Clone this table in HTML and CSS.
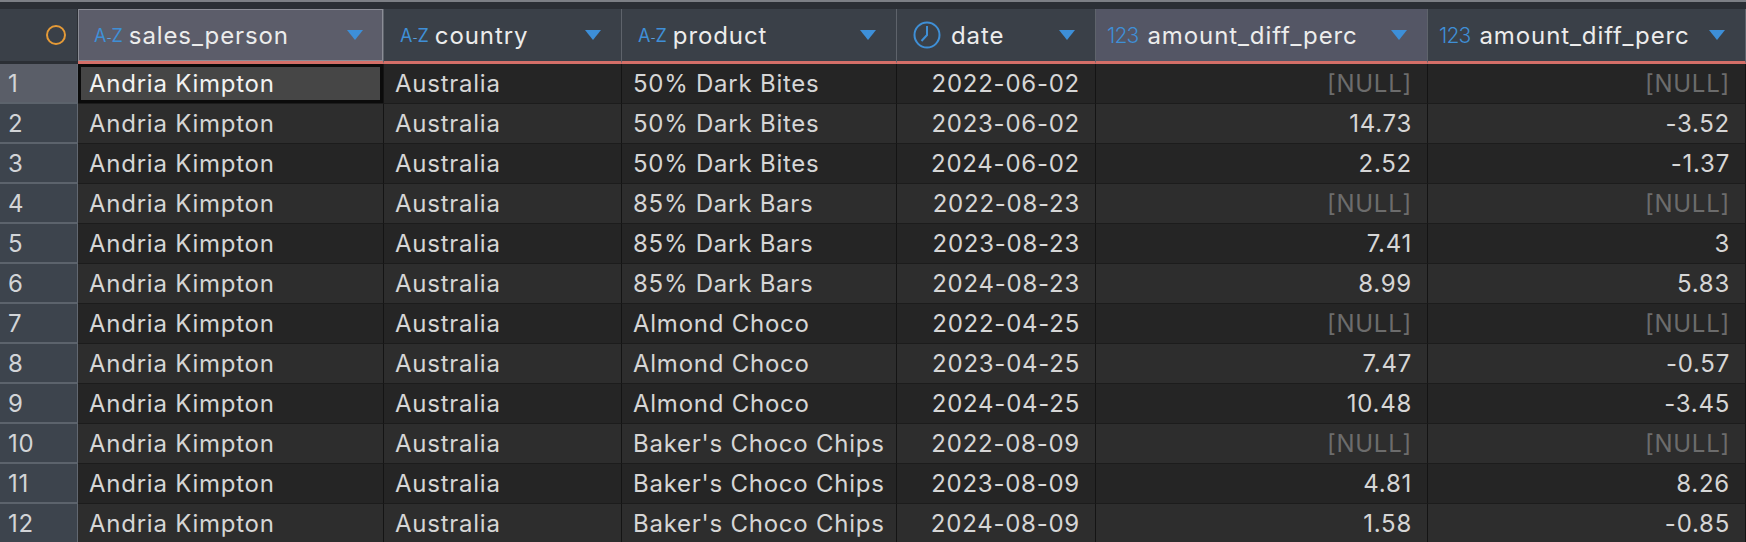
FILE: index.html
```html
<!DOCTYPE html>
<html lang="en">

<head>
    <meta charset="UTF-8">
    <title>Result grid</title>
    <link rel="stylesheet" href="styles.css">
</head>

<body>
    <div class="topbar"></div>

    <div class="grid">
        <div class="row head">
            <div class="cell num-head"><span class="ring"></span></div>
            <div class="cell col selected">
                <span class="type az">A<i>-</i>Z</span><span class="name">sales_person</span>
                <svg class="sort" width="16" height="10" viewBox="0 0 16 10"><polygon points="0,0 16,0 8,10" /></svg>
            </div>
            <div class="cell col">
                <span class="type az">A<i>-</i>Z</span><span class="name">country</span>
                <svg class="sort" width="16" height="10" viewBox="0 0 16 10"><polygon points="0,0 16,0 8,10" /></svg>
            </div>
            <div class="cell col">
                <span class="type az">A<i>-</i>Z</span><span class="name">product</span>
                <svg class="sort" width="16" height="10" viewBox="0 0 16 10"><polygon points="0,0 16,0 8,10" /></svg>
            </div>
            <div class="cell col">
                <svg class="clock" width="28" height="28" viewBox="0 0 28 28">
                    <circle cx="14" cy="14" r="12.5" />
                    <polyline points="14,5 14,14 8.5,20" />
                </svg><span class="name">date</span>
                <svg class="sort" width="16" height="10" viewBox="0 0 16 10"><polygon points="0,0 16,0 8,10" /></svg>
            </div>
            <div class="cell col marked">
                <span class="type digits">123</span><span class="name">amount_diff_perc</span>
                <svg class="sort" width="16" height="10" viewBox="0 0 16 10"><polygon points="0,0 16,0 8,10" /></svg>
            </div>
            <div class="cell col">
                <span class="type digits">123</span><span class="name">amount_diff_perc</span>
                <svg class="sort" width="16" height="10" viewBox="0 0 16 10"><polygon points="0,0 16,0 8,10" /></svg>
            </div>
        </div>

        <div class="row odd">
            <div class="cell num current">1</div>
            <div class="cell active">Andria Kimpton</div>
            <div class="cell">Australia</div>
            <div class="cell">50% Dark Bites</div>
            <div class="cell right">2022-06-02</div>
            <div class="cell right null">[NULL]</div>
            <div class="cell right null">[NULL]</div>
        </div>
        <div class="row even">
            <div class="cell num">2</div>
            <div class="cell">Andria Kimpton</div>
            <div class="cell">Australia</div>
            <div class="cell">50% Dark Bites</div>
            <div class="cell right">2023-06-02</div>
            <div class="cell right">14.73</div>
            <div class="cell right">-3.52</div>
        </div>
        <div class="row odd">
            <div class="cell num">3</div>
            <div class="cell">Andria Kimpton</div>
            <div class="cell">Australia</div>
            <div class="cell">50% Dark Bites</div>
            <div class="cell right">2024-06-02</div>
            <div class="cell right">2.52</div>
            <div class="cell right">-1.37</div>
        </div>
        <div class="row even">
            <div class="cell num">4</div>
            <div class="cell">Andria Kimpton</div>
            <div class="cell">Australia</div>
            <div class="cell">85% Dark Bars</div>
            <div class="cell right">2022-08-23</div>
            <div class="cell right null">[NULL]</div>
            <div class="cell right null">[NULL]</div>
        </div>
        <div class="row odd">
            <div class="cell num">5</div>
            <div class="cell">Andria Kimpton</div>
            <div class="cell">Australia</div>
            <div class="cell">85% Dark Bars</div>
            <div class="cell right">2023-08-23</div>
            <div class="cell right">7.41</div>
            <div class="cell right">3</div>
        </div>
        <div class="row even">
            <div class="cell num">6</div>
            <div class="cell">Andria Kimpton</div>
            <div class="cell">Australia</div>
            <div class="cell">85% Dark Bars</div>
            <div class="cell right">2024-08-23</div>
            <div class="cell right">8.99</div>
            <div class="cell right">5.83</div>
        </div>
        <div class="row odd">
            <div class="cell num">7</div>
            <div class="cell">Andria Kimpton</div>
            <div class="cell">Australia</div>
            <div class="cell">Almond Choco</div>
            <div class="cell right">2022-04-25</div>
            <div class="cell right null">[NULL]</div>
            <div class="cell right null">[NULL]</div>
        </div>
        <div class="row even">
            <div class="cell num">8</div>
            <div class="cell">Andria Kimpton</div>
            <div class="cell">Australia</div>
            <div class="cell">Almond Choco</div>
            <div class="cell right">2023-04-25</div>
            <div class="cell right">7.47</div>
            <div class="cell right">-0.57</div>
        </div>
        <div class="row odd">
            <div class="cell num">9</div>
            <div class="cell">Andria Kimpton</div>
            <div class="cell">Australia</div>
            <div class="cell">Almond Choco</div>
            <div class="cell right">2024-04-25</div>
            <div class="cell right">10.48</div>
            <div class="cell right">-3.45</div>
        </div>
        <div class="row even">
            <div class="cell num">10</div>
            <div class="cell">Andria Kimpton</div>
            <div class="cell">Australia</div>
            <div class="cell">Baker's Choco Chips</div>
            <div class="cell right">2022-08-09</div>
            <div class="cell right null">[NULL]</div>
            <div class="cell right null">[NULL]</div>
        </div>
        <div class="row odd">
            <div class="cell num">11</div>
            <div class="cell">Andria Kimpton</div>
            <div class="cell">Australia</div>
            <div class="cell">Baker's Choco Chips</div>
            <div class="cell right">2023-08-09</div>
            <div class="cell right">4.81</div>
            <div class="cell right">8.26</div>
        </div>
        <div class="row even">
            <div class="cell num">12</div>
            <div class="cell">Andria Kimpton</div>
            <div class="cell">Australia</div>
            <div class="cell">Baker's Choco Chips</div>
            <div class="cell right">2024-08-09</div>
            <div class="cell right">1.58</div>
            <div class="cell right">-0.85</div>
        </div>
    </div>
</body>

</html>
```

FILE: styles.css
```css
* {
    box-sizing: border-box;
}

body {
    margin: 0;
    background-color: #2c3036;
    font-family: Inter, "Liberation Sans", sans-serif;
    font-size: 24px;
    color: #d6d6d6;
    overflow: hidden;
    height: 100vh;
}

.topbar {
    height: 9px;
    border-top: 2px solid #7c7f85;
    background-color: #2b2f35;
}

.row {
    display: grid;
    grid-template-columns: 78px 306px 238px 275px 199px 332px 1fr;
}

.cell {
    display: flex;
    align-items: center;
    height: 40px;
    padding: 0 11px;
    border-right: 1px solid #141414;
    border-bottom: 1px solid #1c1c1c;
    white-space: nowrap;
    letter-spacing: 0.75px;
}

.odd .cell {
    background-color: #252525;
}

.even .cell {
    background-color: #2d2d2d;
}

.cell.right {
    justify-content: flex-end;
    padding-right: 15px;
}

.cell.null {
    color: #6c6c6c;
}

/* row numbers */
.row .num {
    background-color: #3d444d;
    border-right: 1px solid #626871;
    border-bottom: 2px solid #5c636c;
    padding-left: 8px;
    color: #d2d4d7;
}

.row .num.current {
    background-color: #5a5e68;
}

.odd .active {
    background-color: #464646;
    box-shadow: inset 0 0 0 3px #0b0b0b;
    color: #f2f2f2;
}

/* header */
.head .cell {
    height: 55px;
    background-color: #3a4048;
    border-right: 1px solid #5e636b;
    border-bottom: 3px solid #d46f68;
    color: #ececec;
    padding: 0 20px 0 16px;
    letter-spacing: 0.9px;
}

.head .num-head {
    justify-content: flex-end;
    padding-right: 11px;
    border-bottom-color: #2b2f35;
    border-right-color: #2b2f35;
}

.ring {
    width: 20px;
    height: 20px;
    border: 2px solid #e59a37;
    border-radius: 50%;
}

.head .selected {
    background-color: #5c5d6a;
    box-shadow: inset 0 0 0 1px #8b8d96;
}

.head .marked {
    background-color: #545665;
}

.type {
    color: #3f8fd6;
    margin-right: 7px;
}

.az {
    font-size: 18px;
    letter-spacing: -1px;
}

.az i {
    font-style: normal;
    font-size: 11px;
    color: #5fa3e0;
    margin: 0 1px;
}

.digits {
    font-size: 21px;
    font-weight: 300;
    letter-spacing: -0.8px;
    margin-left: -5px;
    margin-right: 9px;
}

.clock {
    margin-right: 10px;
    fill: none;
    stroke: #3f8fd6;
    stroke-width: 2;
}

.name {
    flex: 1;
}

.sort {
    fill: #3d8fd8;
    flex: none;
}
```
